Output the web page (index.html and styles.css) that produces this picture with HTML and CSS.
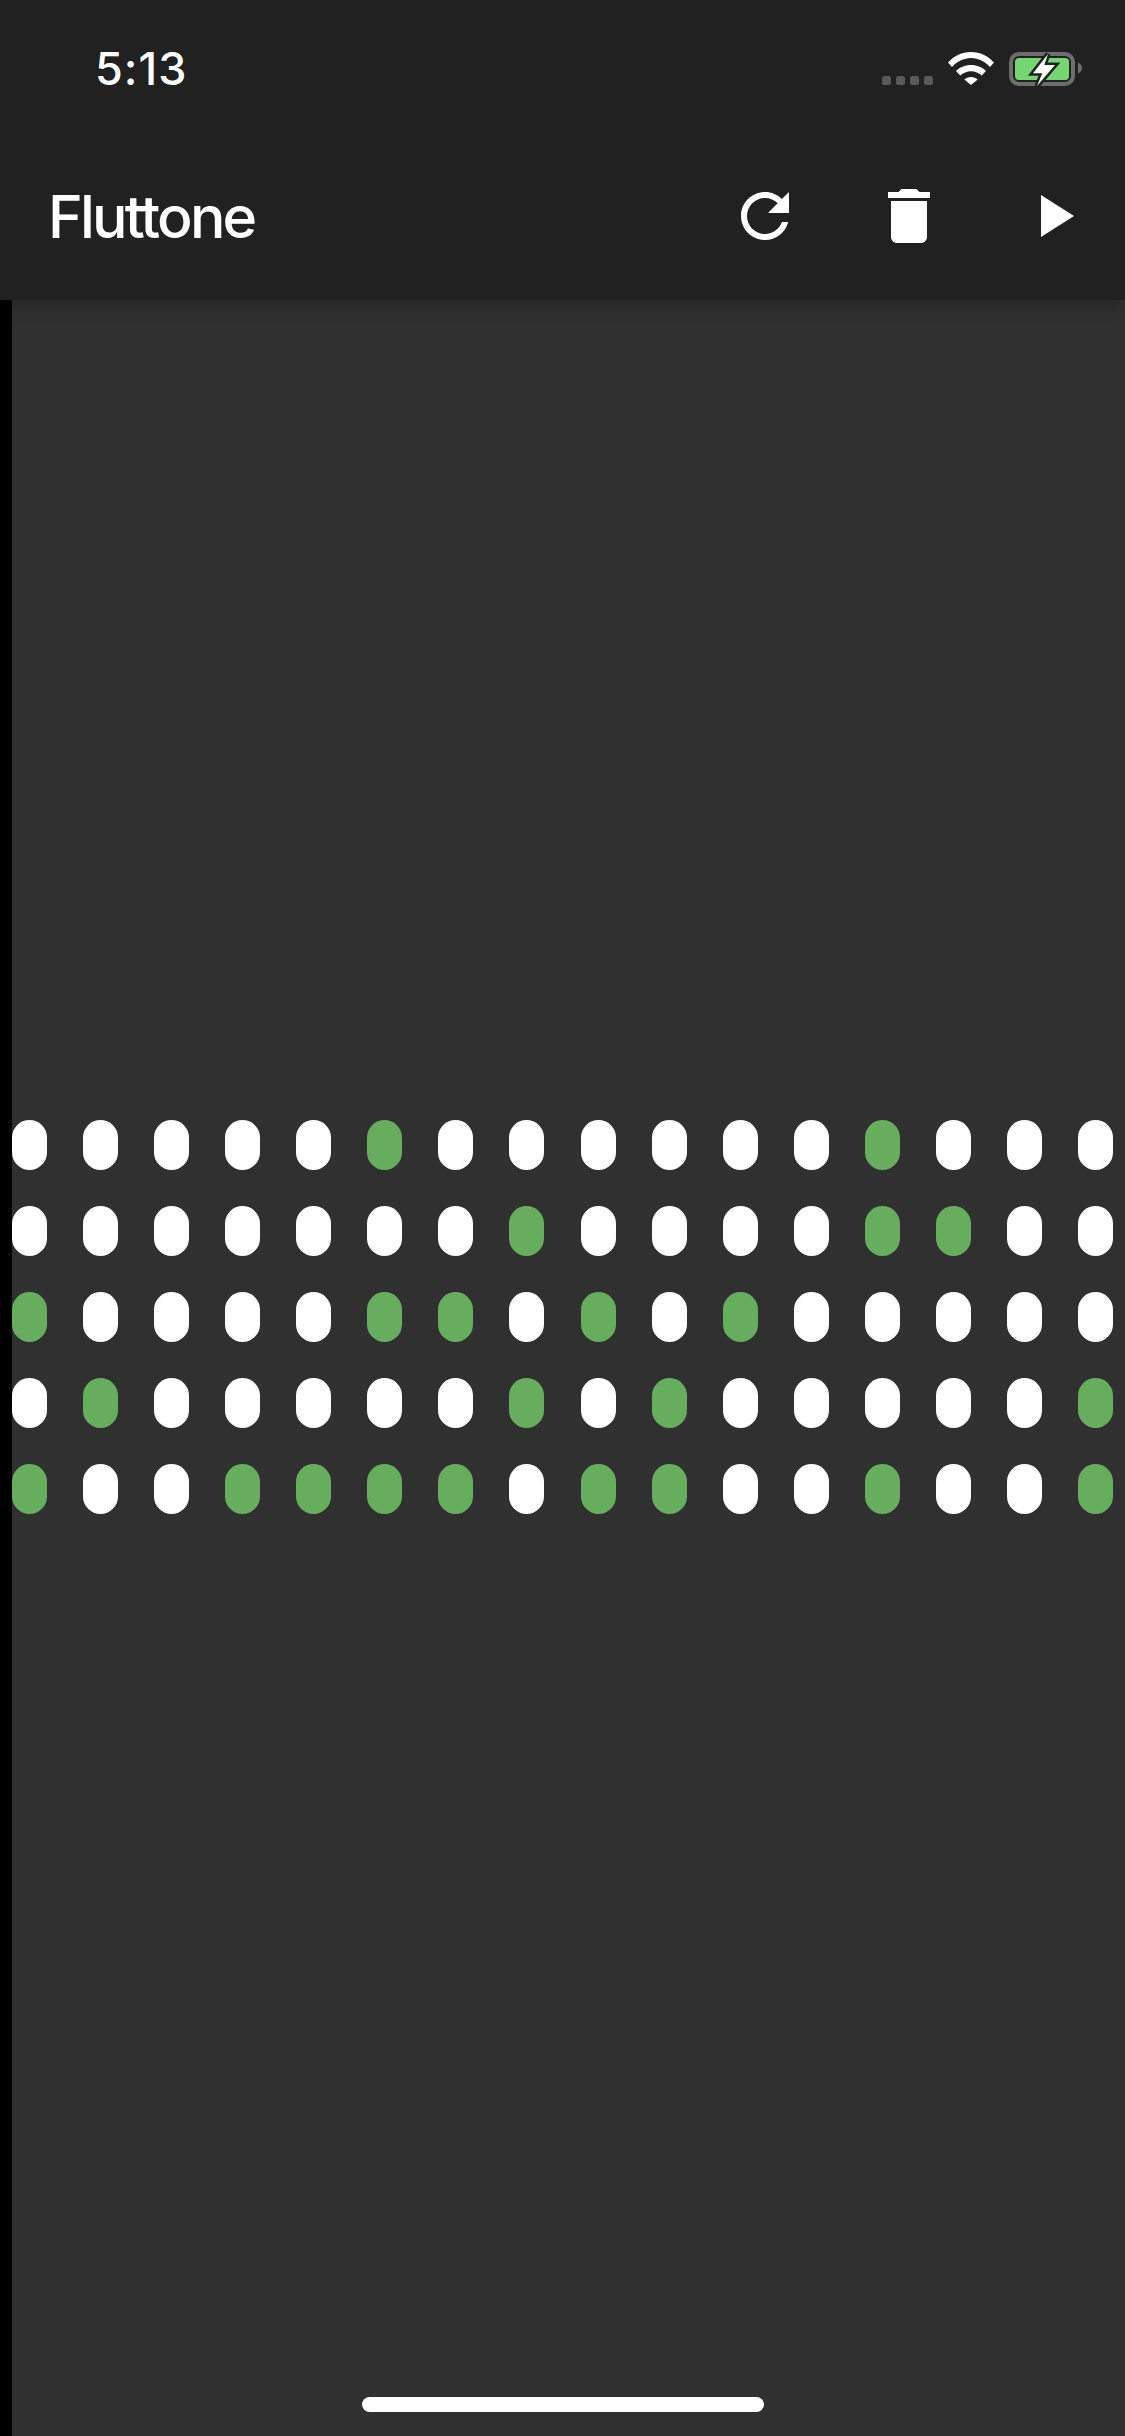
FILE: index.html
```html
<!DOCTYPE html>
<html lang="en">
<head>
    <meta charset="UTF-8">
    <meta name="viewport" content="width=device-width, initial-scale=1.0">
    <title>Fluttone</title>
    <link rel="stylesheet" href="styles.css">
</head>
<body>
    <header class="header">
        <div class="status-bar">
            <span class="time">5:13</span>
            <div class="status-icons">
                <div class="signal">
                    <span></span><span></span><span></span><span></span>
                </div>
                <svg class="wifi" width="46" height="34" viewBox="0 0 46 34">
                    <path d="M0 10.5C6 4 14 0 23 0S40 4 46 10.5L42 15C37 9.5 30.5 6 23 6S9 9.5 4 15Z"/>
                    <path d="M8 19C11.5 15.5 17 13 23 13S34.5 15.5 38 19L33.7 23.5C31 21 27 19.2 23 19.2S15 21 12.3 23.5Z"/>
                    <path d="M16.3 27.5C18 26 20.5 25 23 25S28 26 29.7 27.5L23 33Z"/>
                </svg>
                <svg class="battery" width="73" height="34" viewBox="0 0 73 34">
                    <rect class="battery-case" x="2" y="2" width="62" height="30" rx="8"/>
                    <rect class="battery-level" x="6" y="6" width="54" height="22" rx="4"/>
                    <path class="battery-cap" d="M69 10.5C71.5 11.5 73 13.5 73 16S71.5 20.5 69 21.5Z"/>
                    <path class="battery-bolt" d="M39 2L24 21.3H33.3L28 34L46 13H35.3Z"/>
                </svg>
            </div>
        </div>
        <div class="toolbar">
            <h1 class="title">Fluttone</h1>
            <div class="actions">
                <svg class="icon" viewBox="0 0 24 24"><path d="M17.65 6.35C16.2 4.9 14.21 4 12 4c-4.42 0-7.99 3.58-7.99 8s3.57 8 7.99 8c3.73 0 6.84-2.55 7.73-6h-2.08c-.82 2.33-3.04 4-5.65 4-3.31 0-6-2.69-6-6s2.69-6 6-6c1.66 0 3.14.69 4.22 1.78L13 11h7V4l-2.35 2.35z"/></svg>
                <svg class="icon" viewBox="0 0 24 24"><path d="M6 19c0 1.1.9 2 2 2h8c1.1 0 2-.9 2-2V7H6v12zM19 4h-3.5l-1-1h-5l-1 1H5v2h14V4z"/></svg>
                <svg class="icon" viewBox="0 0 24 24"><path d="M8 5v14l11-7z"/></svg>
            </div>
        </div>
    </header>

    <main class="board">
        <div class="grid">
            <!-- row 1 -->
            <span class="dot"></span><span class="dot"></span><span class="dot"></span><span class="dot"></span>
            <span class="dot"></span><span class="dot on"></span><span class="dot"></span><span class="dot"></span>
            <span class="dot"></span><span class="dot"></span><span class="dot"></span><span class="dot"></span>
            <span class="dot on"></span><span class="dot"></span><span class="dot"></span><span class="dot"></span>
            <!-- row 2 -->
            <span class="dot"></span><span class="dot"></span><span class="dot"></span><span class="dot"></span>
            <span class="dot"></span><span class="dot"></span><span class="dot"></span><span class="dot on"></span>
            <span class="dot"></span><span class="dot"></span><span class="dot"></span><span class="dot"></span>
            <span class="dot on"></span><span class="dot on"></span><span class="dot"></span><span class="dot"></span>
            <!-- row 3 -->
            <span class="dot on"></span><span class="dot"></span><span class="dot"></span><span class="dot"></span>
            <span class="dot"></span><span class="dot on"></span><span class="dot on"></span><span class="dot"></span>
            <span class="dot on"></span><span class="dot"></span><span class="dot on"></span><span class="dot"></span>
            <span class="dot"></span><span class="dot"></span><span class="dot"></span><span class="dot"></span>
            <!-- row 4 -->
            <span class="dot"></span><span class="dot on"></span><span class="dot"></span><span class="dot"></span>
            <span class="dot"></span><span class="dot"></span><span class="dot"></span><span class="dot on"></span>
            <span class="dot"></span><span class="dot on"></span><span class="dot"></span><span class="dot"></span>
            <span class="dot"></span><span class="dot"></span><span class="dot"></span><span class="dot on"></span>
            <!-- row 5 -->
            <span class="dot on"></span><span class="dot"></span><span class="dot"></span><span class="dot on"></span>
            <span class="dot on"></span><span class="dot on"></span><span class="dot on"></span><span class="dot"></span>
            <span class="dot on"></span><span class="dot on"></span><span class="dot"></span><span class="dot"></span>
            <span class="dot on"></span><span class="dot"></span><span class="dot"></span><span class="dot on"></span>
        </div>
    </main>

    <div class="home-indicator"></div>
</body>
</html>
```

FILE: styles.css
```css
* {
    box-sizing: border-box;
}
body {
    margin: 0;
    height: 2436px;
    display: flex;
    flex-direction: column;
    position: relative;
    overflow: hidden;
    font-family: Inter, "Liberation Sans", sans-serif;
    background-color: #303030;
    color: #fff;
}
.header {
    height: 300px;
    flex: none;
    position: relative;
    z-index: 1;
    background-color: #212121;
    box-shadow: 0 6px 15px rgba(0, 0, 0, 0.2);
}
.status-bar {
    height: 132px;
    padding: 6px 43px 0 95px;
    display: flex;
    align-items: center;
    justify-content: space-between;
}
.time {
    font-size: 45px;
    font-weight: 500;
    letter-spacing: 1px;
    line-height: 54px;
}
.status-icons {
    display: flex;
    align-items: flex-start;
    gap: 15px;
}
.signal {
    display: flex;
    gap: 5px;
    align-self: flex-end;
    margin-bottom: 1px;
}
.signal span {
    width: 9px;
    height: 9px;
    border-radius: 2.5px;
    background-color: #5a5a5a;
}
.wifi {
    fill: #fff;
}
.battery {
    overflow: visible;
}
.battery-case {
    fill: none;
    stroke: #6e6e6e;
    stroke-width: 4;
}
.battery-level {
    fill: #76d672;
}
.battery-cap {
    fill: #6e6e6e;
}
.battery-bolt {
    fill: #fff;
    stroke: #212121;
    stroke-width: 5;
    paint-order: stroke;
}
.toolbar {
    height: 168px;
    padding: 0 36px 0 48px;
    display: flex;
    align-items: center;
    justify-content: space-between;
}
.title {
    margin: 0;
    font-size: 59px;
    font-weight: 500;
    letter-spacing: -2.8px;
}
.actions {
    display: flex;
    gap: 72px;
}
.icon {
    display: block;
    width: 72px;
    height: 72px;
    fill: #fff;
}
.board {
    flex: 1;
    border-left: 12px solid #000;
    padding: 0 12px 102px 0;
    display: flex;
    flex-direction: column;
    justify-content: center;
}
.grid {
    display: grid;
    grid-template-columns: repeat(16, 35px);
    grid-auto-rows: 50px;
    row-gap: 36px;
    justify-content: space-between;
}
.dot {
    border-radius: 17.5px;
    background-color: #fff;
}
.dot.on {
    background-color: #66ad5e;
}
.home-indicator {
    position: absolute;
    left: 362px;
    bottom: 24px;
    width: 402px;
    height: 15px;
    border-radius: 7.5px;
    background-color: #fff;
}
```
